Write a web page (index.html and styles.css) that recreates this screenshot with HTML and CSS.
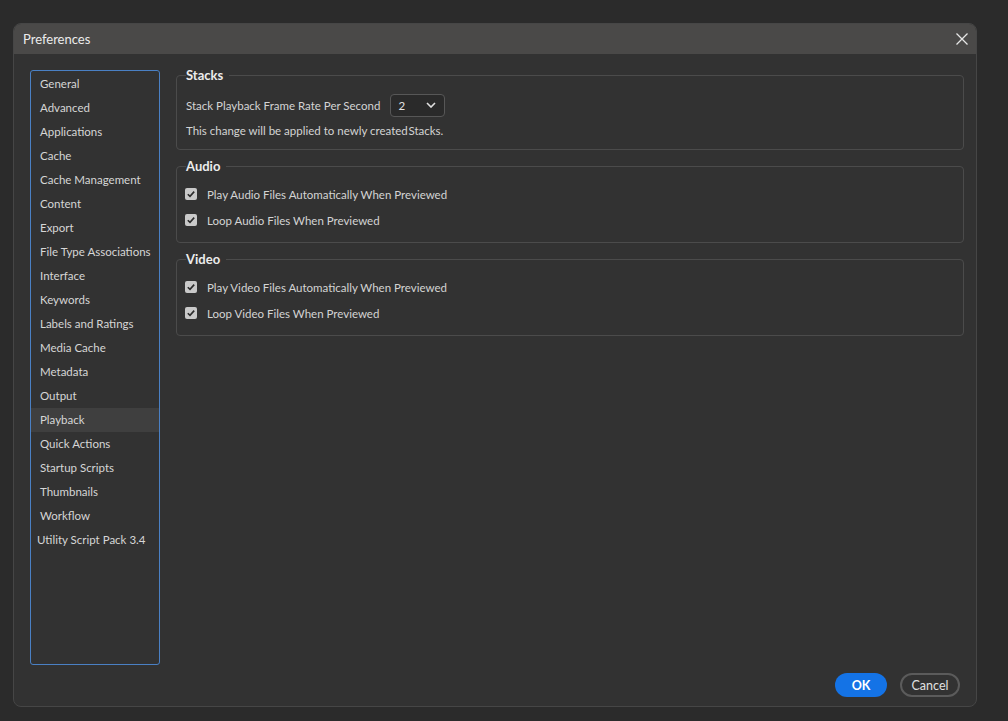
FILE: index.html
```html
<!DOCTYPE html>
<html>
<head>
<meta charset="utf-8">
<link rel="stylesheet" href="styles.css">
</head>
<body>
<div class="dialog">
  <div class="titlebar">
    <span class="title">Preferences</span>
    <svg class="close" width="14" height="14" viewBox="0 0 14 14"><path d="M1.5 1.5 L12.5 12.5 M12.5 1.5 L1.5 12.5" stroke="#e6e6e6" stroke-width="1.3" fill="none"/></svg>
  </div>
  <div class="body">
    <div class="main">
      <ul class="nav">
        <li>General</li>
        <li>Advanced</li>
        <li>Applications</li>
        <li>Cache</li>
        <li>Cache Management</li>
        <li>Content</li>
        <li>Export</li>
        <li>File Type Associations</li>
        <li>Interface</li>
        <li>Keywords</li>
        <li>Labels and Ratings</li>
        <li>Media Cache</li>
        <li>Metadata</li>
        <li>Output</li>
        <li class="active">Playback</li>
        <li>Quick Actions</li>
        <li>Startup Scripts</li>
        <li>Thumbnails</li>
        <li>Workflow</li>
        <li class="ext">Utility Script Pack 3.4</li>
      </ul>
      <div class="content">
        <fieldset class="group stacks">
          <legend>Stacks</legend>
          <div class="row">
            <span>Stack Playback Frame Rate Per Second</span>
            <div class="select"><span>2</span>
              <svg width="10" height="6" viewBox="0 0 10 6"><path d="M1 1 L5 5 L9 1" stroke="#e0e0e0" stroke-width="1.6" fill="none"/></svg>
            </div>
          </div>
          <div class="note">This change will be applied to newly created&#8202;Stacks.</div>
        </fieldset>
        <fieldset class="group">
          <legend>Audio</legend>
          <label class="check"><span class="box"><svg width="12" height="12" viewBox="0 0 12 12"><path d="M2.8 6.2 L5 8.4 L9.2 3.6" stroke="#2b2b2b" stroke-width="1.6" fill="none"/></svg></span>Play Audio Files Automatically When Previewed</label>
          <label class="check"><span class="box"><svg width="12" height="12" viewBox="0 0 12 12"><path d="M2.8 6.2 L5 8.4 L9.2 3.6" stroke="#2b2b2b" stroke-width="1.6" fill="none"/></svg></span>Loop Audio Files When Previewed</label>
        </fieldset>
        <fieldset class="group">
          <legend>Video</legend>
          <label class="check"><span class="box"><svg width="12" height="12" viewBox="0 0 12 12"><path d="M2.8 6.2 L5 8.4 L9.2 3.6" stroke="#2b2b2b" stroke-width="1.6" fill="none"/></svg></span>Play Video Files Automatically When Previewed</label>
          <label class="check"><span class="box"><svg width="12" height="12" viewBox="0 0 12 12"><path d="M2.8 6.2 L5 8.4 L9.2 3.6" stroke="#2b2b2b" stroke-width="1.6" fill="none"/></svg></span>Loop Video Files When Previewed</label>
        </fieldset>
      </div>
    </div>
    <div class="footer">
      <button class="btn ok">OK</button>
      <button class="btn cancel">Cancel</button>
    </div>
  </div>
</div>
</body>
</html>
```
FILE: styles.css
```css
html, body {
  margin: 0;
  padding: 0;
  height: 100%;
}
body {
  background: #2b2b2b;
  font-family: "Lato", "Noto Sans", sans-serif;
  font-size: 11.5px;
  color: #d4d4d4;
  padding: 23px 0 0 13px;
  box-sizing: border-box;
}
.dialog {
  width: 964px;
  height: 684px;
  background: #323232;
  border: 1px solid #464646;
  border-radius: 8px;
  box-sizing: border-box;
  display: flex;
  flex-direction: column;
  overflow: hidden;
}
.titlebar {
  height: 30px;
  flex: none;
  background: #4a4948;
  display: flex;
  align-items: center;
  justify-content: space-between;
  padding: 0 7px 0 9px;
}
.title {
  font-size: 13px;
  color: #ececec;
  margin-top: -1px;
}
.close {
  display: block;
}
.body {
  flex: 1;
  display: flex;
  flex-direction: column;
  padding: 16px 12px 0 16px;
}
.main {
  display: flex;
  gap: 16px;
  height: 595px;
}
.nav {
  list-style: none;
  margin: 0;
  padding: 1px 0 0 0;
  width: 130px;
  flex: none;
  box-sizing: border-box;
  border: 1px solid #4a80c4;
  border-radius: 3px;
}
.nav li {
  height: 24px;
  line-height: 24px;
  padding-left: 9px;
  white-space: nowrap;
  color: #d6d6d6;
}
.nav li.active {
  background: #3f3f3f;
}
.nav li.ext {
  padding-left: 6px;
}
.content {
  flex: 1;
  display: flex;
  flex-direction: column;
  gap: 9px;
  margin-top: -2px;
}
.group {
  margin: 0;
  border: 1px solid #4b4b4b;
  border-radius: 4px;
  padding: 0 9px 9px 9px;
  min-width: 0;
}
.group.stacks {
  padding-bottom: 8px;
}
.group legend {
  font-weight: bold;
  font-size: 13px;
  color: #ececec;
  padding: 0 6px 0 0;
  line-height: 15px;
}
.row {
  display: flex;
  align-items: center;
  gap: 10px;
  margin-top: 10px;
  height: 24px;
}
.select {
  width: 55px;
  height: 23px;
  box-sizing: border-box;
  border: 1px solid #575757;
  border-radius: 4px;
  background: #2a2a2a;
  display: flex;
  align-items: center;
  justify-content: space-between;
  padding: 0 8px 0 7px;
  color: #e2e2e2;
}
.select svg {
  display: block;
}
.note {
  margin-top: 4px;
  line-height: 20px;
}
.check {
  display: flex;
  align-items: center;
  gap: 10px;
  height: 26px;
}
.group .check:first-of-type {
  margin-top: 7px;
}
.box {
  width: 12px;
  height: 12px;
  background: #c9c9c9;
  border-radius: 2px;
  display: block;
  margin-left: -1px;
}
.box svg {
  display: block;
}
.footer {
  display: flex;
  justify-content: flex-end;
  gap: 13px;
  margin-top: 8px;
  padding-right: 4px;
}
.btn {
  height: 24px;
  border-radius: 12px;
  font-family: "Lato", "Noto Sans", sans-serif;
  font-size: 12.5px;
  font-weight: bold;
  padding: 0;
  box-sizing: border-box;
}
.ok {
  width: 52px;
  background: #1473e6;
  border: none;
  color: #ffffff;
}
.cancel {
  width: 60px;
  background: transparent;
  border: 2px solid #5b5b5b;
  color: #e0e0e0;
  font-weight: normal;
}
```
